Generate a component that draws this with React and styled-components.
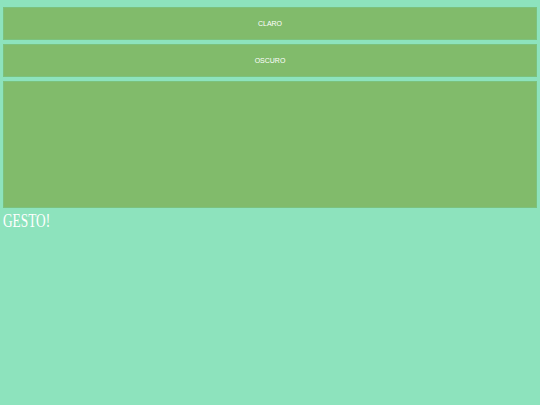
import React from "react";
import styled, { createGlobalStyle } from "styled-components";

const GlobalStyle = createGlobalStyle`
  html, body {
    margin: 0;
    padding: 0;
    background: #8de3bd;
  }
  body {
    font-family: "Liberation Serif", serif;
  }
`;

const Page = styled.div`
  display: flex;
  flex-direction: column;
  gap: 4px;
  padding: 7px 3px 0;
`;

const ThemeButton = styled.button`
  height: 33px;
  background: #81bb6b;
  border: 1px solid #7bc27d;
  color: #ffffff;
  font-family: "Liberation Sans", Arial, sans-serif;
  font-size: 7px;
  padding: 0;
  cursor: pointer;
`;

const GesturePad = styled.div`
  height: 127px;
  box-sizing: border-box;
  background: #81bb6b;
  border: 1px solid #7bc27d;
`;

const Label = styled.div`
  color: #ffffff;
  font-size: 18px;
  line-height: 22px;
  margin-top: -2px;
  transform: scaleX(0.74);
  transform-origin: left center;
`;

const App = () => (
  <>
    <GlobalStyle />
    <Page>
      <ThemeButton>CLARO</ThemeButton>
      <ThemeButton>OSCURO</ThemeButton>
      <GesturePad />
      <Label>GESTO!</Label>
    </Page>
  </>
);

export default App;
